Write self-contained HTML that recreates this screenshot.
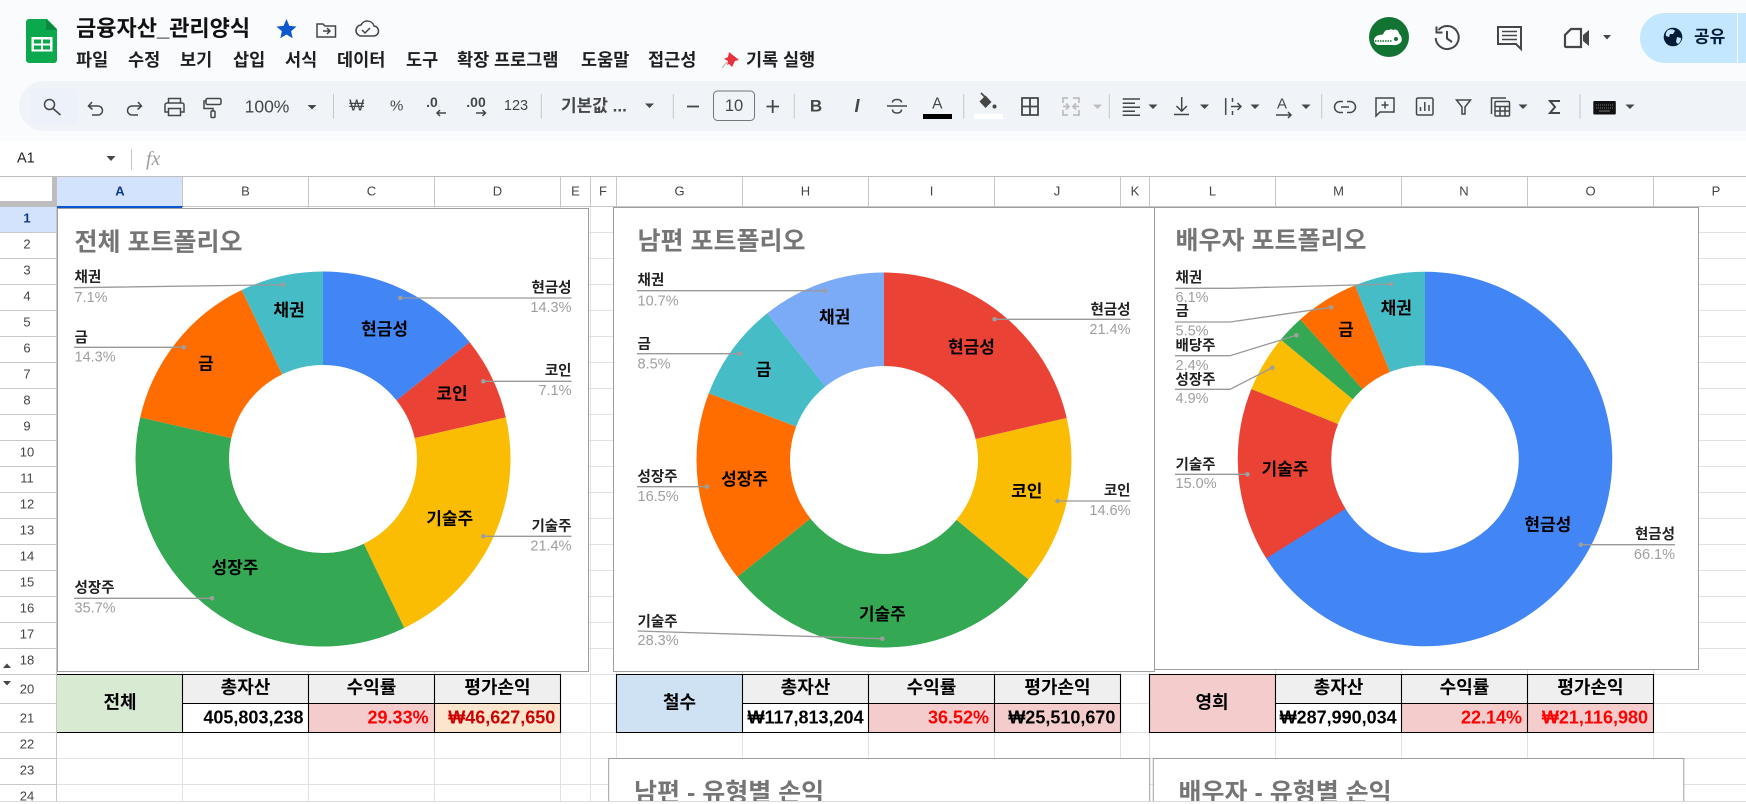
<!DOCTYPE html>
<html lang="ko"><head><meta charset="utf-8"><title>금융자산_관리양식</title>
<style>
html,body{margin:0;padding:0;background:#fff;width:1746px;height:804px;overflow:hidden}
svg{display:block;position:absolute;left:0;top:0}
text{font-family:"Liberation Sans","Noto Sans CJK KR",sans-serif;dominant-baseline:central}
.s{font-size:17px;font-weight:700;fill:#000;text-anchor:middle}
.n{font-size:14.5px;font-weight:700;fill:#222;transform:translateY(1px)}
.p{font-size:14.5px;fill:#9e9e9e;transform:translateY(1px)}
.r{text-anchor:end}
.t{font-size:25px;font-weight:700;fill:#757575}
.h{font-size:13px;fill:#444;text-anchor:middle}
.m{font-size:17.5px;font-weight:700;fill:#1f1f1f}
.b{font-size:18px;font-weight:700;fill:#000;text-anchor:middle}
.v{font-size:18px;font-weight:700;fill:#000;text-anchor:end}
.red{fill:#f00}
.ic{fill:none;stroke:#444746;stroke-width:1.5}
.tb{font-size:15px;fill:#444746;text-anchor:middle}
.l{fill:none;stroke:#999;stroke-width:1.3}
.d{fill:#9e9e9e}
.g{fill:none;stroke-width:93.5}
</style></head><body>
<svg width="1746" height="804" viewBox="0 0 1746 804" xmlns="http://www.w3.org/2000/svg">
<!-- header -->
<rect width="1746" height="141" fill="#f9fbfd"/>
<path d="M29 19H47L57 29V60a3 3 0 0 1-3 3H29a3 3 0 0 1-3-3V22a3 3 0 0 1 3-3Z" fill="#0ca84d"/>
<path d="M46 19L57 30H46Z" fill="#0b8a3e"/>
<rect x="31.5" y="37" width="21" height="14.5" fill="#fff"/>
<path d="M34 39.5h7v4h-7zM43 39.5h7v4h-7zM34 45.5h7v4h-7zM43 45.5h7v4h-7z" fill="#0ca84d"/>
<text x="76" y="28.5" font-size="22px" font-weight="700" fill="#111">금융자산_관리양식</text>
<path d="M286.5 19l2.9 6.9 7.1.6-5.4 4.7 1.6 7.1-6.2-3.8-6.2 3.8 1.6-7.1-5.4-4.7 7.1-.6Z" fill="#0b57d0"/>
<path d="M317 24h6l2 2h10.5v11H317Z" class="ic"/><path d="M323 31h7M327 28l3 3-3 3" class="ic" stroke-width="1.4"/>
<path d="M362 36h11a5 5 0 0 0 1-10 7 7 0 0 0-13-1 5.5 5.5 0 0 0 1 11Z" class="ic"/><path d="M362 30l3 3 5-5" class="ic" stroke-width="1.4"/>
<text class="m" x="76" y="60">파일</text><text class="m" x="128" y="60">수정</text><text class="m" x="180" y="60">보기</text><text class="m" x="233" y="60">삽입</text><text class="m" x="285" y="60">서식</text><text class="m" x="337" y="60">데이터</text><text class="m" x="406" y="60">도구</text><text class="m" x="457" y="60">확장 프로그램</text><text class="m" x="581" y="60">도움말</text><text class="m" x="648" y="60">접근성</text>
<path d="M729 52l10 8-4 1-3 6-3-3-2 1 1-4-4-2 4-2Z" fill="#e8323c"/><path d="M727 62l-5 6" stroke="#bbb" stroke-width="1.2"/>
<text class="m" x="746" y="60">기록 실행</text>
<circle cx="1389" cy="37" r="20" fill="#137333"/>
<path d="M1374.5 38Q1376 35 1383 34.5Q1385 29 1389 30Q1391 28.5 1393 30Q1396 28.5 1398 31Q1399 34 1401 36Q1403 41 1400 43Q1398 45.5 1392 45H1378Q1374 44 1374 40Z" fill="#fff"/>
<path d="M1375 41H1392" stroke="#137333" stroke-width="1.5" stroke-dasharray="1.5 1"/><circle cx="1396" cy="39" r="2" fill="#137333"/>
<path d="M1438.5 30A11.5 11.5 0 1 1 1435.7 38M1436.5 26.5V32.5H1442.5M1447 31V38.5L1452 42" fill="none" stroke="#444746" stroke-width="2"/>
<path d="M1498 27H1521V49L1516 44H1498Z" fill="none" stroke="#444746" stroke-width="2"/><path d="M1502 31.5H1517M1502 35.5H1517M1502 39.5H1517" stroke="#444746" stroke-width="1.6"/>
<path d="M1571 29H1581V47H1566a1 1 0 0 1-1-1V35Z" fill="none" stroke="#444746" stroke-width="2.2"/><path d="M1583 35L1589 30V46L1583 41Z" fill="#444746"/>
<path d="M1603 35h8l-4 4.5Z" fill="#444746"/>
<path d="M1665 13H1746V63H1665A25 25 0 0 1 1665 13Z" fill="#c2e7ff"/><path d="M1737.5 13V63" stroke="#fff" stroke-width="1"/>
<circle cx="1673" cy="37" r="9.3" fill="#001d35"/><path d="M1668 30q5-2 7 1l-2 3-3 0-1 3-3-1Q1665 33 1668 30ZM1677 37l4 1q0 4-3 6l-2-2Z" fill="#c2e7ff"/>
<text x="1694" y="37" font-size="17px" font-weight="700" fill="#001d35">공유</text>
<!-- toolbar -->
<rect x="19" y="81" width="1800" height="50" rx="25" fill="#f0f3f8"/>
<rect x="30" y="89" width="47" height="35" fill="#edf2fa"/>
<circle cx="49.5" cy="104.5" r="5" class="ic"/><path d="M53 108.500L60.5 115" class="ic"/>
<path d="M92 102L88.5 106L92.5 109.5M89 106H98a4.500 4.500 0 0 1 0 9H92" class="ic"/>
<path d="M138 102L141.5 106L137.5 109.5M141 106H132a4.500 4.500 0 0 0 0 9H138" class="ic"/>
<path d="M168.5 103V98.5H180.5V103M168.5 112H165V105a2 2 0 0 1 2-2H182a2 2 0 0 1 2 2V112H180.5M168.5 108.5H180.5V115.5H168.5Z" class="ic"/>
<rect x="206" y="98.5" width="15" height="6" rx="1.5" class="ic"/><path d="M206 101H204V108.5H213V111" class="ic"/><rect x="211" y="111" width="4" height="6.5" rx="1" class="ic"/>
<text class="tb" x="267" y="106.500" style="font-size:17.5px">100%</text>
<path d="M307.5 105h9l-4.5 4.5Z" fill="#444746"/>
<path d="M333.5 94V118.7M541.3 94V118.7M673.3 94V118.7M794.3 94V118.7M963.7 94V118.7M1109.3 94V118.7M1321.7 94V118.7M1580 94V118.7" stroke="#c7c7c7"/>
<text class="tb" x="356.7" y="106" style="font-size:16px;font-weight:400">₩</text>
<text class="tb" x="396.7" y="106">%</text>
<text class="tb" x="432" y="102" style="font-size:14px;font-weight:700">.0</text><path d="M446 113H437M440 110l-3 3 3 3" class="ic" stroke-width="1.5"/>
<text class="tb" x="476" y="102" style="font-size:14px;font-weight:700">.00</text><path d="M476 113H485.5M482.5 110l3 3-3 3" class="ic" stroke-width="1.5"/>
<text class="tb" x="516" y="106" style="font-size:14.5px">123</text>
<text x="561" y="106" font-size="17px" font-weight="700" fill="#444746">기본값 ...</text>
<path d="M645 103.5h9l-4.5 4.5Z" fill="#444746"/>
<path d="M687 106.5H699" stroke="#444746" stroke-width="1.8"/>
<rect x="713.5" y="91" width="41" height="29.5" rx="4" fill="none" stroke="#747775"/>
<text class="tb" x="734" y="106" style="font-size:16.5px">10</text>
<path d="M766.5 106.5H779M772.7 100V113" stroke="#444746" stroke-width="1.8"/>
<text class="tb" x="816" y="106" style="font-size:17px;font-weight:700">B</text>
<text class="tb" x="857" y="106" style="font-size:18px;font-weight:700;font-style:italic">I</text>
<path d="M887 106H907M892.5 102.5q0-3 4.500-3t4.500 3M892.5 109.5q0 3.500 4.500 3.500t4.500-3.500" class="ic"/>
<text class="tb" x="937.3" y="104" style="font-size:15.5px">A</text><rect x="923" y="114" width="29" height="5" fill="#000"/>
<path d="M981 93L986 98" stroke="#444746" stroke-width="1.7"/><path d="M979.5 101.5L985.5 95.5L991.5 102L985.5 108Z" fill="#444746"/><circle cx="994.5" cy="106.5" r="2" fill="#444746"/><rect x="974" y="114" width="29" height="5" fill="#fff"/>
<path d="M1022 98H1038V115H1022ZM1030 98V115M1022 106.5H1038" fill="none" stroke="#444746" stroke-width="1.8"/>
<path d="M1063 103V98H1068M1073 98H1079V103M1079 110V115H1073M1068 115H1063V110M1063 106.5H1069M1066 103.5l3 3-3 3M1079 106.5H1073M1076 103.5l-3 3 3 3" fill="none" stroke="#bdbdbd" stroke-width="1.7"/>
<path d="M1093 104.5h9l-4.5 4.5Z" fill="#bdbdbd"/>
<path d="M1122.7 99H1140M1122.7 103.3H1135M1122.7 107.3H1140M1122.7 111.2H1135M1122.7 115.3H1140" stroke="#444746" stroke-width="1.5"/>
<path d="M1148.5 104.5h9l-4.5 4.5Z" fill="#444746"/>
<path d="M1181.7 97V111M1176.5 106l5.200 5.200 5.200-5.200M1174 114.5H1189" class="ic"/>
<path d="M1200 104.5h9l-4.5 4.5Z" fill="#444746"/>
<path d="M1225.7 98V115M1232.5 98v4M1232.5 111v4M1231 106.5H1241M1237.5 103l3.500 3.500-3.500 3.500" class="ic"/>
<path d="M1250.5 104.5h9l-4.5 4.5Z" fill="#444746"/>
<text class="tb" x="1282" y="104" style="font-size:15px">A</text><path d="M1276 115H1291M1288 112l3 3-3 3" class="ic"/>
<path d="M1301.5 104.5h9l-4.5 4.5Z" fill="#444746"/>
<path d="M1343 101.5H1340a5.500 5.500 0 0 0 0 11H1343M1347 101.5H1350a5.500 5.500 0 0 1 0 11H1347M1341 107H1349" class="ic"/>
<path d="M1376 98H1394V112H1380L1376 116Z" class="ic"/><path d="M1385 101.5V108.5M1381.5 105H1388.5" class="ic"/>
<rect x="1416.5" y="98" width="16.5" height="17" rx="1.5" class="ic"/><path d="M1420.5 111V107M1424.8 111V102M1429 111V105" class="ic"/>
<path d="M1456.5 100H1470.5L1465 107V114H1462V107Z" class="ic"/>
<path d="M1491.5 114V98H1506" class="ic"/><rect x="1495" y="101.5" width="14.5" height="14.5" rx="1" class="ic"/><path d="M1495 106.5H1509.5M1495 111H1509.5M1500 106.5V116M1505 106.5V116" class="ic" stroke-width="1.3"/>
<path d="M1518.5 104.5h9l-4.5 4.5Z" fill="#444746"/>
<path d="M1560 101H1550L1555 107L1550 113H1560" fill="none" stroke="#444746" stroke-width="2"/>
<rect x="1593.3" y="101" width="22.5" height="13.5" rx="1" fill="#111"/><path d="M1596 105H1613M1596 108H1613" stroke="#777" stroke-dasharray="1 1"/><path d="M1599 111H1610" stroke="#777"/>
<path d="M1625.5 104.5h9l-4.5 4.5Z" fill="#444746"/>
<!-- formula bar -->
<text x="17" y="158.5" font-size="14.5px" fill="#1f1f1f">A1</text>
<path d="M106.500 156h9l-4.5 5Z" fill="#444746"/>
<path d="M131.5 149V170" stroke="#c7c7c7"/>
<text x="146" y="159" font-size="20px" font-style="italic" fill="#9e9e9e" style="font-family:'Liberation Serif',serif">fx</text>
<!-- column headers -->
<rect x="57" y="177" width="126" height="30" fill="#d3e3fd"/>
<rect x="0" y="207" width="57" height="25" fill="#d3e3fd"/>
<rect x="52" y="177" width="5" height="30" fill="#bdbdbd"/><rect x="0" y="201" width="57" height="6" fill="#bdbdbd"/>
<path d="M0 176.5H1746" stroke="#bdbdbd" stroke-width="1"/>
<path d="M182.5 177V207M308.5 177V207M434.5 177V207M560.5 177V207M590.5 177V207M616.5 177V207M742.5 177V207M868.5 177V207M994.5 177V207M1120.5 177V207M1149.5 177V207M1275.5 177V207M1401.5 177V207M1527.5 177V207M1653.5 177V207" stroke="#c7c7c7"/>
<path d="M57 206.5H1746" stroke="#c7c7c7"/>
<rect x="57" y="206" width="126" height="2" fill="#0b57d0"/>
<text class="h" x="120" y="191" style="font-weight:700;fill:#0b3a8a">A</text><text class="h" x="245.5" y="191">B</text><text class="h" x="371.5" y="191">C</text><text class="h" x="497.5" y="191">D</text><text class="h" x="575.5" y="191">E</text><text class="h" x="603" y="191">F</text><text class="h" x="679.5" y="191">G</text><text class="h" x="805.5" y="191">H</text><text class="h" x="931.5" y="191">I</text><text class="h" x="1057" y="191">J</text><text class="h" x="1135" y="191">K</text><text class="h" x="1212.5" y="191">L</text><text class="h" x="1338.5" y="191">M</text><text class="h" x="1464" y="191">N</text><text class="h" x="1590.5" y="191">O</text><text class="h" x="1716" y="191">P</text>
<!-- grid -->
<path d="M57 232.5H1746M57 258.5H1746M57 284.5H1746M57 310.5H1746M57 336.5H1746M57 362.5H1746M57 388.5H1746M57 414.5H1746M57 440.5H1746M57 466.5H1746M57 492.5H1746M57 518.5H1746M57 544.5H1746M57 570.5H1746M57 596.5H1746M57 622.5H1746M57 648.5H1746M57 674.5H1746M57 703.5H1746M57 732.5H1746M57 758.5H1746M57 784.5H1746M182.5 207V804M308.5 207V804M434.5 207V804M560.5 207V804M590.5 207V804M616.5 207V804M742.5 207V804M868.5 207V804M994.5 207V804M1120.5 207V804M1149.5 207V804M1275.5 207V804M1401.5 207V804M1527.5 207V804M1653.5 207V804" stroke="#e1e1e1" fill="none"/>
<path d="M0 232.5H57M0 258.5H57M0 284.5H57M0 310.5H57M0 336.5H57M0 362.5H57M0 388.5H57M0 414.5H57M0 440.5H57M0 466.5H57M0 492.5H57M0 518.5H57M0 544.5H57M0 570.5H57M0 596.5H57M0 622.5H57M0 648.5H57M0 674.5H57M0 703.5H57M0 732.5H57M0 758.5H57M0 784.5H57M56.5 207V804" stroke="#c7c7c7" fill="none"/>
<text class="h" x="27" y="218" style="font-weight:700;fill:#0b3a8a">1</text><text class="h" x="27" y="244">2</text><text class="h" x="27" y="270">3</text><text class="h" x="27" y="296">4</text><text class="h" x="27" y="322">5</text><text class="h" x="27" y="348">6</text><text class="h" x="27" y="374">7</text><text class="h" x="27" y="400">8</text><text class="h" x="27" y="426">9</text><text class="h" x="27" y="452">10</text><text class="h" x="27" y="478">11</text><text class="h" x="27" y="504">12</text><text class="h" x="27" y="530">13</text><text class="h" x="27" y="556">14</text><text class="h" x="27" y="582">15</text><text class="h" x="27" y="608">16</text><text class="h" x="27" y="634">17</text><text class="h" x="27" y="660">18</text><text class="h" x="27" y="689">20</text><text class="h" x="27" y="718">21</text><text class="h" x="27" y="744">22</text><text class="h" x="27" y="770">23</text><text class="h" x="27" y="796">24</text>
<path d="M3 668h8l-4-4.5ZM3 681h8l-4 4.5Z" fill="#444746"/>
<!-- chart 1 -->
<rect x="57.5" y="208.5" width="531" height="463" fill="#fff" stroke="#9e9e9e" stroke-width="1"/>
<text class="t" x="74.5" y="242.5">전체 포트폴리오</text>
<g transform="rotate(-90 323 459)">
<circle class="g" cx="323" cy="459" r="140.75" pathLength="100" stroke="#4285f4" stroke-dasharray="14.286 85.714"/>
<circle class="g" cx="323" cy="459" r="140.75" pathLength="100" stroke="#ea4335" stroke-dasharray="7.143 92.857" stroke-dashoffset="-14.286"/>
<circle class="g" cx="323" cy="459" r="140.75" pathLength="100" stroke="#fbbc04" stroke-dasharray="21.429 78.571" stroke-dashoffset="-21.429"/>
<circle class="g" cx="323" cy="459" r="140.75" pathLength="100" stroke="#34a853" stroke-dasharray="35.714 64.286" stroke-dashoffset="-42.857"/>
<circle class="g" cx="323" cy="459" r="140.75" pathLength="100" stroke="#ff6d01" stroke-dasharray="14.286 85.714" stroke-dashoffset="-78.571"/>
<circle class="g" cx="323" cy="459" r="140.75" pathLength="100" stroke="#46bdc6" stroke-dasharray="7.143 92.857" stroke-dashoffset="-92.857"/>
</g>
<text class="s" x="384.6" y="329.3">현금성</text><text class="s" x="452" y="394">코인</text><text class="s" x="289" y="310.7">채권</text><text class="s" x="206" y="364">금</text><text class="s" x="449.7" y="519">기술주</text><text class="s" x="235" y="568">성장주</text>
<path class="l" d="M74 287.7L283 284.7M74 347.3H183.7M571.5 298H400.3M571.5 381.3H483.3M571.5 536.3H483.3M74 598.3H212"/>
<g class="d"><circle cx="283" cy="284.7" r="2.3"/><circle cx="183.7" cy="347.3" r="2.3"/><circle cx="400.3" cy="298" r="2.3"/><circle cx="483.3" cy="381.3" r="2.3"/><circle cx="483.3" cy="536.3" r="2.3"/><circle cx="212" cy="598.3" r="2.3"/></g>
<text class="n" x="74.5" y="277">채권</text><text class="p" x="74.5" y="297">7.1%</text>
<text class="n" x="74.5" y="337.7">금</text><text class="p" x="74.5" y="356.5">14.3%</text>
<text class="n" x="74.5" y="587.7">성장주</text><text class="p" x="74.5" y="607.7">35.7%</text>
<text class="n r" x="571.5" y="287.3">현금성</text><text class="p r" x="571.5" y="307">14.3%</text>
<text class="n r" x="571.5" y="370.7">코인</text><text class="p r" x="571.5" y="390">7.1%</text>
<text class="n r" x="571.5" y="526">기술주</text><text class="p r" x="571.5" y="545.7">21.4%</text>
<!-- chart 2 -->
<rect x="613.5" y="207.5" width="541" height="464" fill="#fff" stroke="#9e9e9e" stroke-width="1"/>
<text class="t" x="637.5" y="241.5">남편 포트폴리오</text>
<g transform="rotate(-90 884 460)">
<circle class="g" cx="884" cy="460" r="140.75" pathLength="100" stroke="#ea4335" stroke-dasharray="21.4 78.6"/>
<circle class="g" cx="884" cy="460" r="140.75" pathLength="100" stroke="#fbbc04" stroke-dasharray="14.6 85.4" stroke-dashoffset="-21.4"/>
<circle class="g" cx="884" cy="460" r="140.75" pathLength="100" stroke="#34a853" stroke-dasharray="28.3 71.7" stroke-dashoffset="-36"/>
<circle class="g" cx="884" cy="460" r="140.75" pathLength="100" stroke="#ff6d01" stroke-dasharray="16.5 83.5" stroke-dashoffset="-64.3"/>
<circle class="g" cx="884" cy="460" r="140.75" pathLength="100" stroke="#46bdc6" stroke-dasharray="8.5 91.5" stroke-dashoffset="-80.8"/>
<circle class="g" cx="884" cy="460" r="140.75" pathLength="100" stroke="#7baaf7" stroke-dasharray="10.7 89.3" stroke-dashoffset="-89.3"/>
</g>
<text class="s" x="971.4" y="347.7">현금성</text><text class="s" x="1026.8" y="491.7">코인</text><text class="s" x="834.6" y="317.3">채권</text><text class="s" x="763.6" y="370">금</text><text class="s" x="744.6" y="479.3">성장주</text><text class="s" x="882.3" y="614.3">기술주</text>
<path class="l" d="M637 290.7H825M637 353.7H740M637 486.7H707M1130.5 319.3H994.6M1130.5 501H1057.6M637.4 631L882.3 638.7"/>
<g class="d"><circle cx="825" cy="290.7" r="2.3"/><circle cx="740" cy="353.7" r="2.3"/><circle cx="707" cy="486.7" r="2.3"/><circle cx="994.6" cy="319.3" r="2.3"/><circle cx="1057.6" cy="501" r="2.3"/><circle cx="882.3" cy="638.7" r="2.3"/></g>
<text class="n" x="637.5" y="280">채권</text><text class="p" x="637.5" y="300.5">10.7%</text>
<text class="n" x="637.5" y="344">금</text><text class="p" x="637.5" y="363.5">8.5%</text>
<text class="n" x="637.5" y="476.7">성장주</text><text class="p" x="637.5" y="496">16.5%</text>
<text class="n" x="637.5" y="621.3">기술주</text><text class="p" x="637.5" y="640">28.3%</text>
<text class="n r" x="1130.5" y="309.3">현금성</text><text class="p r" x="1130.5" y="329">21.4%</text>
<text class="n r" x="1130.5" y="490.7">코인</text><text class="p r" x="1130.5" y="510">14.6%</text>
<!-- chart 3 -->
<rect x="1154.5" y="207.5" width="544" height="462" fill="#fff" stroke="#9e9e9e" stroke-width="1"/>
<text class="t" x="1175.5" y="241">배우자 포트폴리오</text>
<path class="g" d="M1425 318.5A140.5 140.5 0 1 1 1297.5 518" stroke="#4285f4"/>
<g transform="rotate(-90 1425 459)">
<circle class="g" cx="1425" cy="459" r="140.5" pathLength="100" stroke="#ea4335" stroke-dasharray="15 85" stroke-dashoffset="-66.1"/>
<circle class="g" cx="1425" cy="459" r="140.5" pathLength="100" stroke="#fbbc04" stroke-dasharray="4.9 95.1" stroke-dashoffset="-81.1"/>
<circle class="g" cx="1425" cy="459" r="140.5" pathLength="100" stroke="#34a853" stroke-dasharray="2.4 97.6" stroke-dashoffset="-86"/>
<circle class="g" cx="1425" cy="459" r="140.5" pathLength="100" stroke="#ff6d01" stroke-dasharray="5.5 94.5" stroke-dashoffset="-88.4"/>
</g>
<path class="g" d="M1372.45 328.7A140.5 140.5 0 0 1 1425 318.5" stroke="#46bdc6"/>
<text class="s" x="1396.3" y="308.3">채권</text><text class="s" x="1346" y="330">금</text><text class="s" x="1285" y="469.3">기술주</text><text class="s" x="1547.8" y="525">현금성</text>
<path class="l" d="M1175 288.3H1230L1391 284M1175 322H1230L1331.2 307.3M1175 355.7H1230L1296.4 335.3M1175 389.3H1230L1272.3 367.7M1175 474.3H1247.4M1675 544.7H1580.7"/>
<g class="d"><circle cx="1391" cy="284" r="2.3"/><circle cx="1331.2" cy="307.3" r="2.3"/><circle cx="1296.4" cy="335.3" r="2.3"/><circle cx="1272.3" cy="367.7" r="2.3"/><circle cx="1247.4" cy="474.3" r="2.3"/><circle cx="1580.7" cy="544.7" r="2.3"/></g>
<text class="n" x="1175.5" y="277.3">채권</text><text class="p" x="1175.5" y="297">6.1%</text>
<text class="n" x="1175.5" y="311">금</text><text class="p" x="1175.5" y="330.7">5.5%</text>
<text class="n" x="1175.5" y="345.3">배당주</text><text class="p" x="1175.5" y="365">2.4%</text>
<text class="n" x="1175.5" y="379.3">성장주</text><text class="p" x="1175.5" y="398">4.9%</text>
<text class="n" x="1175.5" y="464.7">기술주</text><text class="p" x="1175.5" y="483">15.0%</text>
<text class="n r" x="1675" y="534">현금성</text><text class="p r" x="1675" y="554">66.1%</text>
<!-- table 1 -->
<rect x="57" y="674.5" width="125.5" height="58" fill="#d9ead3"/>
<path d="M182.5 674.5H560.5V703.5H182.5Z" fill="#efefef"/><rect x="182.5" y="703.5" width="126" height="29" fill="#fff"/><rect x="308.5" y="703.5" width="126" height="29" fill="#f4cccc"/><rect x="434.5" y="703.5" width="126" height="29" fill="#fce5cd"/>
<path d="M57 674.5H560.5V732.5H57M182.5 674.5V732.5M308.5 674.5V732.5M434.5 674.5V732.5M182.5 703.5H560.5" fill="none" stroke="#000" stroke-width="1.1"/>
<text class="b" x="120" y="702.7">전체</text><text class="b" x="245.5" y="687.7">총자산</text><text class="b" x="371.5" y="687.7">수익률</text><text class="b" x="497.5" y="687.7">평가손익</text>
<text class="v" x="303.5" y="717.7">405,803,238</text><text class="v red" x="428.6" y="717.7">29.33%</text><text class="v" x="555.3" y="717.7" style="fill:#cc0000">₩46,627,650</text>
<!-- table 2 -->
<rect x="616.5" y="674.5" width="126" height="58" fill="#cfe2f3"/>
<rect x="742.5" y="674.5" width="378" height="29" fill="#efefef"/><rect x="742.5" y="703.5" width="126" height="29" fill="#fff"/><rect x="868.5" y="703.5" width="252" height="29" fill="#f4cccc"/>
<path d="M616.5 674.5H1120.5V732.5H616.5ZM742.5 674.5V732.5M868.5 674.5V732.5M994.5 674.5V732.5M742.5 703.5H1120.5" fill="none" stroke="#000" stroke-width="1.1"/>
<text class="b" x="679.5" y="702.5">철수</text><text class="b" x="805.5" y="687.7">총자산</text><text class="b" x="931.5" y="687.7">수익률</text><text class="b" x="1057.5" y="687.7">평가손익</text>
<text class="v" x="863.6" y="717.7">₩117,813,204</text><text class="v red" x="989" y="717.7">36.52%</text><text class="v" x="1115.4" y="717.7">₩25,510,670</text>
<!-- table 3 -->
<rect x="1149.5" y="674.5" width="126" height="58" fill="#f4cccc"/>
<rect x="1275.5" y="674.5" width="378" height="29" fill="#efefef"/><rect x="1275.5" y="703.5" width="126" height="29" fill="#fff"/><rect x="1401.5" y="703.5" width="252" height="29" fill="#f4cccc"/>
<path d="M1149.5 674.5H1653.5V732.5H1149.5ZM1275.5 674.5V732.5M1401.5 674.5V732.5M1527.5 674.5V732.5M1275.5 703.5H1653.5" fill="none" stroke="#000" stroke-width="1.1"/>
<text class="b" x="1212" y="702.5">영희</text><text class="b" x="1338.5" y="687.7">총자산</text><text class="b" x="1464.5" y="687.7">수익률</text><text class="b" x="1590.5" y="687.7">평가손익</text>
<text class="v" x="1396.7" y="717.7">₩287,990,034</text><text class="v red" x="1522" y="717.7">22.14%</text><text class="v red" x="1648" y="717.7">₩21,116,980</text>
<!-- lower charts -->
<rect x="608.7" y="758.5" width="541" height="60" fill="#fff" stroke="#9e9e9e" stroke-width="1"/>
<text class="t" x="634" y="793">남편 - 유형별 손익</text>
<rect x="1153.3" y="758.5" width="530.5" height="60" fill="#fff" stroke="#9e9e9e" stroke-width="1"/>
<text class="t" x="1178.5" y="793">배우자 - 유형별 손익</text>
<rect x="0" y="801" width="1746" height="3" fill="#fff"/>
<path d="M0 801.5H1746" stroke="#dcdcdc"/>
</svg>
</body></html>
